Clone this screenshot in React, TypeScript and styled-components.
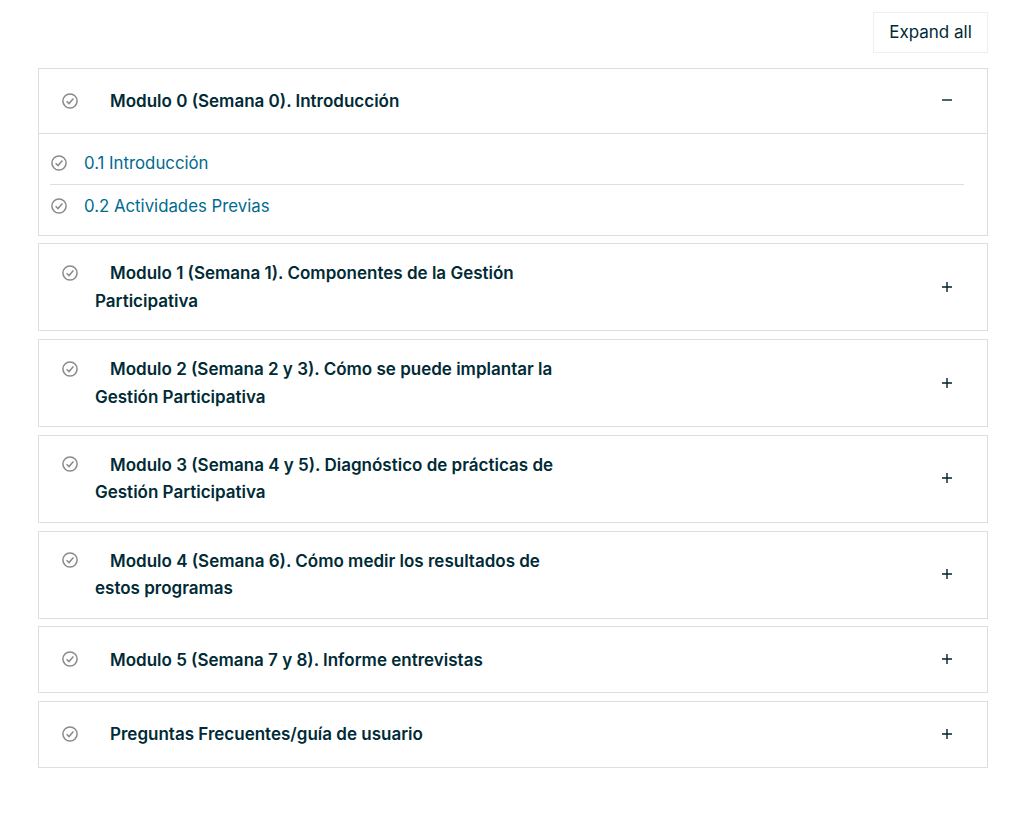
import React from 'react';
import styled, { createGlobalStyle } from 'styled-components';

const GlobalStyle = createGlobalStyle`
  body {
    margin: 0;
    background: #fff;
    color: #002b36;
    font-family: Inter, "Liberation Sans", sans-serif;
    font-size: 17px;
    line-height: 27.52px;
  }
`;

const Page = styled.div`
  padding: 12px 21px 0 38px;
`;

const Toolbar = styled.div`
  display: flex;
  justify-content: flex-end;
  margin-bottom: 15px;
`;

const ExpandButton = styled.button`
  width: 115px;
  height: 41px;
  padding: 0;
  background: #fff;
  border: 1px solid #efefef;
  color: #002b36;
  font: 400 17px/27.52px Inter, "Liberation Sans", sans-serif;
`;

const Item = styled.section`
  border: 1px solid #dedede;
  margin-bottom: 7.75px;
`;

const Header = styled.div<{ $open?: boolean }>`
  display: flex;
  align-items: center;
  justify-content: space-between;
  box-sizing: border-box;
  min-height: 65px;
  padding: ${(p) => (p.$open ? '16.5px' : '15.5px')} 35px 15px 23px;
  border-bottom: ${(p) => (p.$open ? '1px solid #dedede' : 'none')};
`;

const HeaderLeft = styled.div`
  display: flex;
  align-items: flex-start;
`;

const Title = styled.div`
  width: 470px;
  margin-left: 17px;
  padding-top: 0.5px;
  text-indent: 15px;
  font-weight: 600;
`;

const StatusIcon = styled.svg`
  flex: none;
  display: block;
  width: 16px;
  height: 16px;
  margin-top: 5px;
`;

const ToggleIcon = styled.svg<{ $open?: boolean }>`
  display: block;
  width: 10px;
  height: 10px;
  flex: none;
  margin-bottom: ${(p) => (p.$open ? '3px' : '1.5px')};
`;

const Body = styled.div`
  padding: 8px 23px 8.55px 11px;
`;

const Row = styled.div`
  display: flex;
  align-items: flex-start;
  box-sizing: border-box;
  height: 42px;
  padding: 8px 0 0 1px;
  & + & {
    border-top: 1px solid #dedede;
  }
`;

const RowLink = styled.a`
  margin-left: 17px;
  color: #006b8f;
  font-size: 16.8px;
  text-decoration: none;
`;

function Status() {
  return (
    <StatusIcon viewBox="0 0 16 16" fill="none" stroke="#8a8a8a">
      <circle cx="8" cy="8" r="7.1" strokeWidth="1.5" />
      <path d="M4.6 8.3 7 10.6 11.4 5.6" strokeWidth="1.5" />
    </StatusIcon>
  );
}

function Toggle({ open }: { open?: boolean }) {
  return (
    <ToggleIcon $open={open} viewBox="0 0 10 10" stroke="#00222b" strokeWidth="1.4">
      <path d={open ? 'M0 5H10' : 'M0 5H10M5 0V10'} />
    </ToggleIcon>
  );
}

const modules = [
  'Modulo 1 (Semana 1). Componentes de la Gestión Participativa',
  'Modulo 2 (Semana 2 y 3). Cómo se puede implantar la Gestión Participativa',
  'Modulo 3 (Semana 4 y 5). Diagnóstico de prácticas de Gestión Participativa',
  'Modulo 4 (Semana 6). Cómo medir los resultados de estos programas',
  'Modulo 5 (Semana 7 y 8). Informe entrevistas',
  'Preguntas Frecuentes/guía de usuario',
];

export default function App() {
  return (
    <>
      <GlobalStyle />
      <Page>
        <Toolbar>
          <ExpandButton>Expand all</ExpandButton>
        </Toolbar>
        <Item>
          <Header $open>
            <HeaderLeft>
              <Status />
              <Title>Modulo 0 (Semana 0). Introducción</Title>
            </HeaderLeft>
            <Toggle open />
          </Header>
          <Body>
            <Row>
              <Status />
              <RowLink href="#">0.1 Introducción</RowLink>
            </Row>
            <Row>
              <Status />
              <RowLink href="#">0.2 Actividades Previas</RowLink>
            </Row>
          </Body>
        </Item>
        {modules.map((title) => (
          <Item key={title}>
            <Header>
              <HeaderLeft>
                <Status />
                <Title>{title}</Title>
              </HeaderLeft>
              <Toggle />
            </Header>
          </Item>
        ))}
      </Page>
    </>
  );
}
